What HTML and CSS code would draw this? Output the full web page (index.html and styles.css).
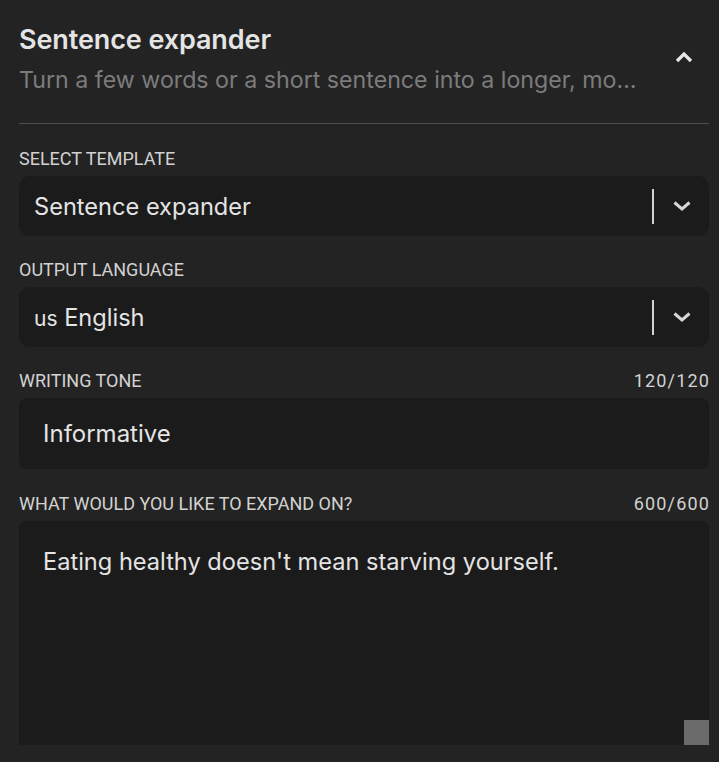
FILE: index.html
```html
<!DOCTYPE html>
<html>
<head>
<meta charset="utf-8">
<link rel="stylesheet" href="styles.css">
</head>
<body>
<div class="panel">
  <div class="header">
    <div class="head-text">
      <div class="title">Sentence expander</div>
      <div class="subtitle">Turn a few words or a short sentence into a longer, mo…</div>
    </div>
    <svg class="collapse" width="18" height="12" viewBox="0 0 18 12"><path d="M2 10 L9 3 L16 10" fill="none" stroke="#e8e8e8" stroke-width="3.2"/></svg>
  </div>
  <div class="divider"></div>

  <div class="field">
    <div class="label-row"><span class="label">SELECT TEMPLATE</span></div>
    <div class="select">
      <span class="value">Sentence expander</span>
      <span class="sep"></span>
      <svg class="chev" width="20" height="12" viewBox="0 0 20 12"><path d="M2.5 2.5 L10 9 L17.5 2.5" fill="none" stroke="#d6d6d6" stroke-width="3"/></svg>
    </div>
  </div>

  <div class="field">
    <div class="label-row"><span class="label">OUTPUT LANGUAGE</span></div>
    <div class="select">
      <span class="value"><span class="flag">us</span> English</span>
      <span class="sep"></span>
      <svg class="chev" width="20" height="12" viewBox="0 0 20 12"><path d="M2.5 2.5 L10 9 L17.5 2.5" fill="none" stroke="#d6d6d6" stroke-width="3"/></svg>
    </div>
  </div>

  <div class="field">
    <div class="label-row"><span class="label">WRITING TONE</span><span class="count">120/120</span></div>
    <div class="input">Informative</div>
  </div>

  <div class="field">
    <div class="label-row"><span class="label">WHAT WOULD YOU LIKE TO EXPAND ON?</span><span class="count">600/600</span></div>
    <div class="textarea">
      <div class="ta-text">Eating healthy doesn't mean starving yourself.</div>
      <span class="grip"></span>
    </div>
  </div>
</div>
</body>
</html>
```
FILE: styles.css
```css
html, body {
  margin: 0;
  padding: 0;
  background: #232323;
}
body {
  font-family: Inter, "Noto Sans", sans-serif;
  color: #e6e6e6;
}
.panel {
  padding: 0 10px 0 19px;
  display: flex;
  flex-direction: column;
}
.header {
  display: flex;
  align-items: flex-start;
  justify-content: space-between;
  padding-top: 24px;
  height: 123px;
  box-sizing: border-box;
}
.title {
  font-size: 27px;
  font-weight: 600;
  line-height: 32px;
  color: #e4e4e4;
  letter-spacing: -0.1px;
}
.subtitle {
  font-size: 23.2px;
  line-height: 32px;
  color: #7c7c7c;
  margin-top: 8px;
  white-space: nowrap;
}
.collapse {
  margin-top: 27px;
  margin-right: 16px;
}
.divider {
  height: 1px;
  background: #4f4f4f;
}
.field {
  display: flex;
  flex-direction: column;
}
.label-row {
  display: flex;
  justify-content: space-between;
  align-items: center;
  height: 18px;
  margin: 0 0 9px;
  font-family: Roboto, "Liberation Sans", sans-serif;
  font-size: 18px;
  color: #d2d2d2;
}
.count {
  letter-spacing: 1.2px;
  margin-right: -1.2px;
}
.divider + .field { margin-top: 25px; }
.field + .field { margin-top: 24px; }
.field:last-child { margin-top: 25px; }
.select {
  height: 60px;
  background: #1b1b1b;
  border-radius: 11px;
  display: flex;
  align-items: center;
  padding: 0 17px 0 15px;
}
.value {
  flex: 1;
  font-size: 23.6px;
  color: #e4e4e4;
}
.flag {
  font-size: 21px;
}
.sep {
  width: 2px;
  height: 35px;
  background: #d2d2d2;
  margin-right: 18px;
}
.input {
  height: 71px;
  background: #1b1b1b;
  border-radius: 8px;
  display: flex;
  align-items: center;
  padding-left: 24px;
  font-size: 24px;
  color: #e4e4e4;
}
.textarea {
  position: relative;
  height: 224px;
  background: #1b1b1b;
  border-radius: 8px 8px 0 0;
  padding: 26px 24px;
  box-sizing: border-box;
}
.ta-text {
  font-size: 23.6px;
  line-height: 30px;
  color: #e4e4e4;
}
.grip {
  position: absolute;
  right: 0;
  bottom: 0;
  width: 25px;
  height: 25px;
  background: #6b6b6b;
}
```
